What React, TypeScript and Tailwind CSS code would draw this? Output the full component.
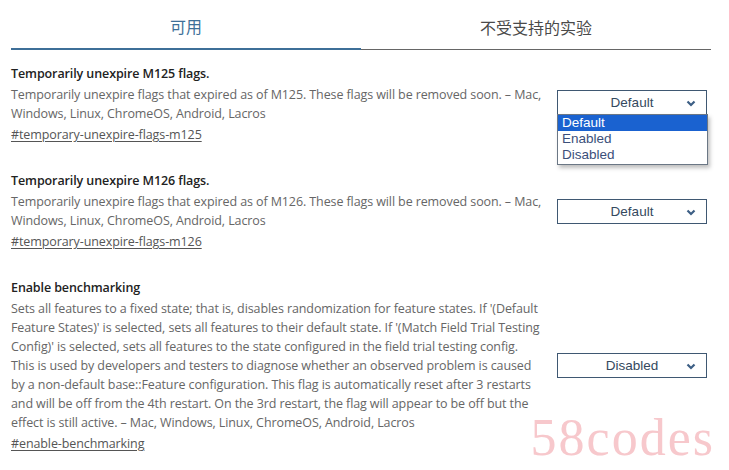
import { useState } from 'react';

interface Flag {
  title: string;
  desc: string;
  id: string;
  value: string;
  open?: boolean;
}

const flags: Flag[] = [
  {
    title: 'Temporarily unexpire M125 flags.',
    desc: 'Temporarily unexpire flags that expired as of M125. These flags will be removed soon. – Mac, Windows, Linux, ChromeOS, Android, Lacros',
    id: 'temporary-unexpire-flags-m125',
    value: 'Default',
    open: true,
  },
  {
    title: 'Temporarily unexpire M126 flags.',
    desc: 'Temporarily unexpire flags that expired as of M126. These flags will be removed soon. – Mac, Windows, Linux, ChromeOS, Android, Lacros',
    id: 'temporary-unexpire-flags-m126',
    value: 'Default',
  },
  {
    title: 'Enable benchmarking',
    desc: "Sets all features to a fixed state; that is, disables randomization for feature states. If '(Default Feature States)' is selected, sets all features to their default state. If '(Match Field Trial Testing Config)' is selected, sets all features to the state configured in the field trial testing config. This is used by developers and testers to diagnose whether an observed problem is caused by a non-default base::Feature configuration. This flag is automatically reset after 3 restarts and will be off from the 4th restart. On the 3rd restart, the flag will appear to be off but the effect is still active. – Mac, Windows, Linux, ChromeOS, Android, Lacros",
    id: 'enable-benchmarking',
    value: 'Disabled',
  },
];

function Chevron() {
  return (
    <svg width="10" height="7" viewBox="0 0 10 7" className="absolute right-[10px] top-[9px]">
      <path d="M1.5 1.5 L5 5 L8.5 1.5" fill="none" stroke="#3d5f85" strokeWidth="2.2" />
    </svg>
  );
}

function FlagSelect({ value, open }: { value: string; open?: boolean }) {
  return (
    <div className="relative w-[150px] shrink-0" style={{ fontFamily: '"Liberation Sans", Arial, sans-serif' }}>
      <div className="relative h-[25px] border border-[#3f5872] bg-white text-center text-[13.5px] leading-[23px] text-[#34495e]">
        {value}
        <Chevron />
      </div>
      {open && (
        <div className="absolute left-0 top-[24px] z-10 w-[151px] border border-[#6b7785] bg-white pb-[1px] text-[13.5px] leading-[16px] text-[#3b4f7a] shadow-[2px_3px_4px_rgba(0,0,0,0.25)]">
          {['Default', 'Enabled', 'Disabled'].map((o, i) => (
            <div key={o} className={i === 0 ? 'bg-[#1a62d0] px-[4px] text-white' : 'px-[4px]'}>
              {o}
            </div>
          ))}
        </div>
      )}
    </div>
  );
}

export default function App() {
  const [tab] = useState(0);

  return (
    <div
      className="relative h-[470px] w-[729px] overflow-hidden bg-white px-[11px]"
      style={{ fontFamily: '"Open Sans", "Noto Sans CJK SC", sans-serif' }}
    >
      <div className="flex w-[700px]">
        {['可用', '不受支持的实验'].map((t, i) => (
          <div
            key={t}
            className={
              i === tab
                ? 'flex h-[50px] flex-1 items-center justify-center border-b-[2px] border-[#3e6f98] pt-[5px] text-[16px] text-[#3e6f98]'
                : 'flex h-[50px] flex-1 items-center justify-center border-b border-[#666] pt-[6px] text-[16px] text-[#4a4a4a]'
            }
          >
            {t}
          </div>
        ))}
      </div>

      <div className="mt-[14px] flex flex-col gap-[27px]">
        {flags.map((f, idx) => (
          <div key={f.id} className="flex items-center gap-[14px]">
            <div className="w-[532px] text-[12.5px] leading-[19px] tracking-[-0.1px]">
              <div className="mb-[2px] font-[550] text-[#222]">{f.title}</div>
              <div className="text-[#666]">{f.desc}</div>
              <div className="mt-[2px] text-[#555] underline underline-offset-2">#{f.id}</div>
            </div>
            <div className={idx === 0 ? 'mb-[3px]' : ''}>
              <FlagSelect value={f.value} open={f.open} />
            </div>
          </div>
        ))}
      </div>

      <div
        className="absolute bottom-[6px] right-[14px] text-[52px] leading-none tracking-[2px] text-[#f7c8cc]"
        style={{ fontFamily: '"Liberation Serif", serif' }}
      >
        58codes
      </div>
    </div>
  );
}
